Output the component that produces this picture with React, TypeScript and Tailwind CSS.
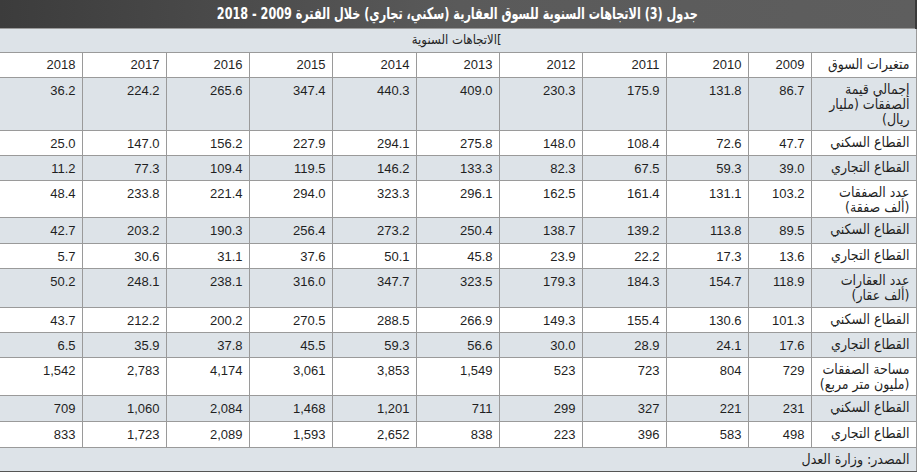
import React from "react";

const years = ["2009", "2010", "2011", "2012", "2013", "2014", "2015", "2016", "2017", "2018"];
const colW = ["w-[63px]", "w-[82px]", "w-[84px]", "w-[83px]", "w-[83px]", "w-[84px]", "w-[83px]", "w-[83px]", "w-[84px]", "w-[83px]"];

type Row = { label: string[]; values: string[]; h: string; shaded: boolean };

const rows: Row[] = [
  { label: ["إجمالي قيمة", "الصفقات (مليار", "ريال)"], values: ["86.7", "131.8", "175.9", "230.3", "409.0", "440.3", "347.4", "265.6", "224.2", "36.2"], h: "h-[53px]", shaded: true },
  { label: ["القطاع السكني"], values: ["47.7", "72.6", "108.4", "148.0", "275.8", "294.1", "227.9", "156.2", "147.0", "25.0"], h: "h-[25px]", shaded: false },
  { label: ["القطاع التجاري"], values: ["39.0", "59.3", "67.5", "82.3", "133.3", "146.2", "119.5", "109.4", "77.3", "11.2"], h: "h-[25px]", shaded: true },
  { label: ["عدد الصفقات", "(ألف صفقة)"], values: ["103.2", "131.1", "161.4", "162.5", "296.1", "323.3", "294.0", "221.4", "233.8", "48.4"], h: "h-[37px]", shaded: false },
  { label: ["القطاع السكني"], values: ["89.5", "113.8", "139.2", "138.7", "250.4", "273.2", "256.4", "190.3", "203.2", "42.7"], h: "h-[26px]", shaded: true },
  { label: ["القطاع التجاري"], values: ["13.6", "17.3", "22.2", "23.9", "45.8", "50.1", "37.6", "31.1", "30.6", "5.7"], h: "h-[25px]", shaded: false },
  { label: ["عدد العقارات", "(ألف عقار)"], values: ["118.9", "154.7", "184.3", "179.3", "323.5", "347.7", "316.0", "238.1", "248.1", "50.2"], h: "h-[39px]", shaded: true },
  { label: ["القطاع السكني"], values: ["101.3", "130.6", "155.4", "149.3", "266.9", "288.5", "270.5", "200.2", "212.2", "43.7"], h: "h-[25px]", shaded: false },
  { label: ["القطاع التجاري"], values: ["17.6", "24.1", "28.9", "30.0", "56.6", "59.3", "45.5", "37.8", "35.9", "6.5"], h: "h-[25px]", shaded: true },
  { label: ["مساحة الصفقات", "(مليون متر مربع)"], values: ["729", "804", "723", "523", "1,549", "3,853", "3,061", "4,174", "2,783", "1,542"], h: "h-[38px]", shaded: false },
  { label: ["القطاع السكني"], values: ["231", "221", "327", "299", "711", "1,201", "1,468", "2,084", "1,060", "709"], h: "h-[26px]", shaded: true },
  { label: ["القطاع التجاري"], values: ["498", "583", "396", "223", "838", "2,652", "1,593", "2,089", "1,723", "833"], h: "h-[26px]", shaded: false },
];

const arabic = "font-['DejaVu_Sans_Condensed','DejaVu_Sans',sans-serif] [font-stretch:condensed]";
const nums = "font-['Liberation_Sans',Arial,sans-serif]";

export default function App() {
  return (
    <div className="w-[917px] h-[472px] bg-white overflow-hidden" dir="rtl">
      <table className="w-[917px] table-fixed border-collapse text-[#1f1f1f]">
        <colgroup>
          <col className="w-[105px]" />
          {colW.map((w, i) => (
            <col key={i} className={w} />
          ))}
        </colgroup>
        <thead>
          <tr className="h-[28px]">
            <th
              colSpan={11}
              className="bg-gradient-to-l from-[#5e5e5e] via-[#5a5a5a] to-[#3c3c3c] border-x-2 border-[#3a3a3a] text-center text-white font-bold text-[16px] p-0 font-['DejaVu_Sans_Condensed','DejaVu_Sans',sans-serif] [font-stretch:condensed]"
            >
              <span className="inline-block scale-x-[0.78] whitespace-nowrap">
                جدول (3) الاتجاهات السنوية للسوق العقارية (سكني، تجاري) خلال الفترة 2009 - 2018
              </span>
            </th>
          </tr>
          <tr className="h-[24px]">
            <th colSpan={11} className={`bg-[#dde3e8] border border-[#9a9a9a] font-normal text-[13px] p-0 ${arabic}`}>
              <span className="block text-right pr-[414px]">]الاتجاهات السنوية</span>
            </th>
          </tr>
          <tr className="h-[25px] bg-white">
            <th className={`border border-[#9a9a9a] text-right font-normal text-[14px] pr-[6px] ${arabic}`}>متغيرات السوق</th>
            {years.map((y) => (
              <th key={y} className={`border border-[#9a9a9a] font-normal text-[13px] p-0 ${nums}`}>
                <div className="text-right pr-[6px]" dir="ltr">{y}</div>
              </th>
            ))}
          </tr>
        </thead>
        <tbody>
          {rows.map((r, ri) => (
            <tr key={ri} className={`${r.h} ${r.shaded ? "bg-[#dde3e8]" : "bg-white"}`}>
              <td className={`border border-[#9a9a9a] align-top text-right text-[14px] leading-[15px] pr-[6px] pt-[4px] whitespace-nowrap ${arabic}`}>
                {r.label.map((l, li) => (
                  <div key={li}>{l}</div>
                ))}
              </td>
              {r.values.map((v, vi) => (
                <td key={vi} className={`border border-[#9a9a9a] align-top text-[13px] leading-[15px] p-0 pt-[5px] ${nums}`}>
                  <div dir="ltr" className="text-right pr-[6px]">{v}</div>
                </td>
              ))}
            </tr>
          ))}
          <tr className="h-[25px] bg-[#dde3e8]">
            <td colSpan={11} className={`border border-[#9a9a9a] border-b-2 border-b-[#555] text-right text-[14px] pr-[6px] ${arabic}`}>
              المصدر: وزارة العدل
            </td>
          </tr>
        </tbody>
      </table>
    </div>
  );
}
